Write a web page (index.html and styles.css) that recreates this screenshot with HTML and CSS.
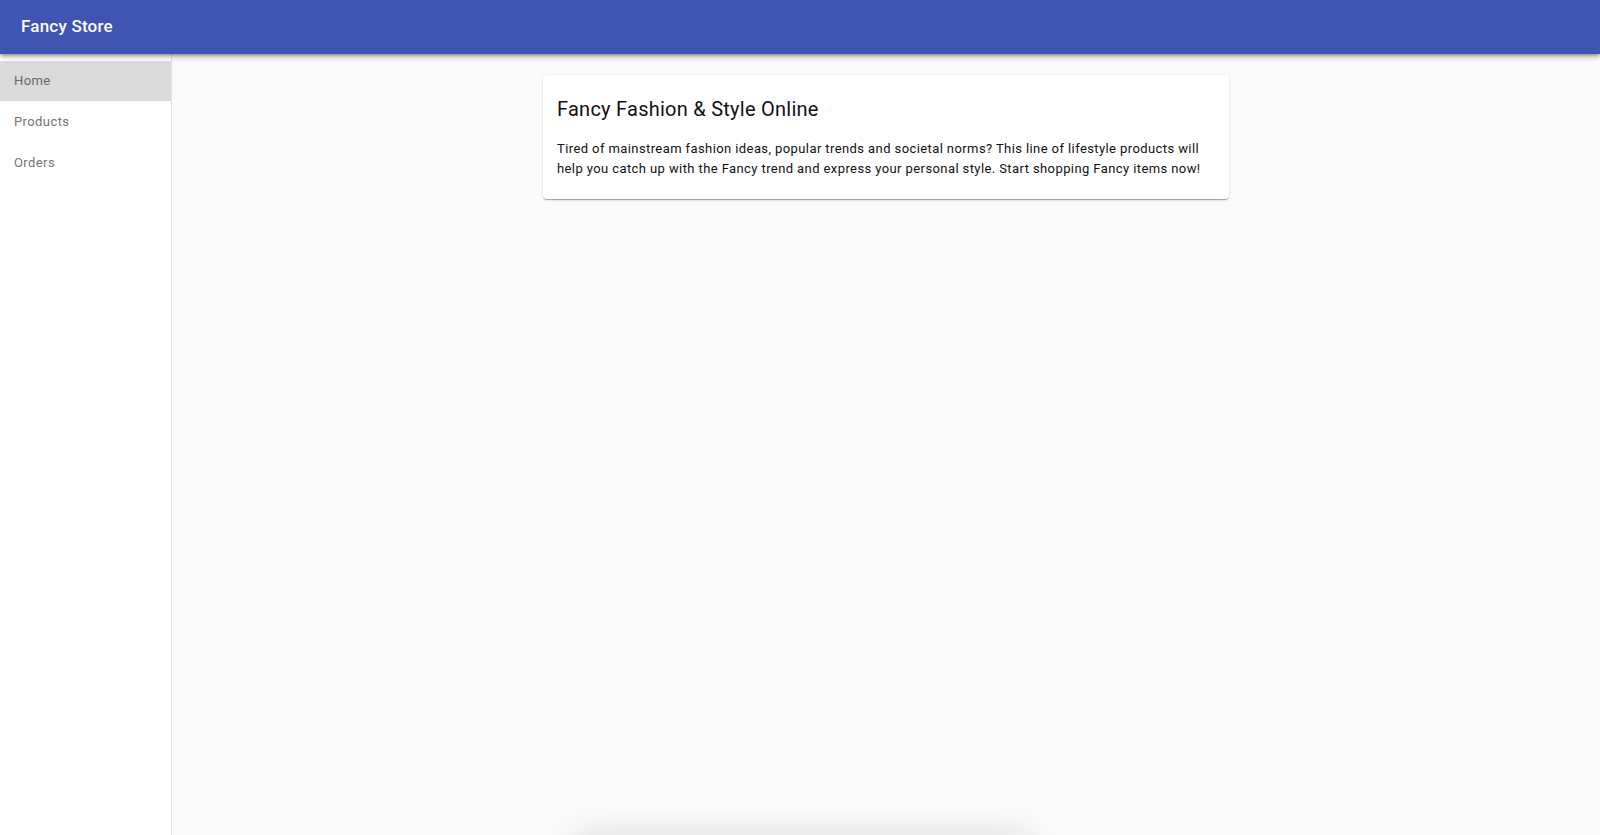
FILE: index.html
```html
<!DOCTYPE html>
<html lang="en">
<head>
<meta charset="utf-8">
<meta name="viewport" content="width=device-width, initial-scale=1">
<title>Fancy Store</title>
<link rel="stylesheet" href="styles.css">
</head>
<body>
<div class="app">
  <header class="app-bar">
    <h1 class="app-title">Fancy Store</h1>
  </header>
  <div class="layout">
    <nav class="drawer" aria-label="Main">
      <a class="nav-item nav-item-active" href="#home" aria-current="page">Home</a>
      <a class="nav-item" href="#products">Products</a>
      <a class="nav-item" href="#orders">Orders</a>
    </nav>
    <main class="content">
      <article class="card">
        <h2 class="card-title">Fancy Fashion &amp; Style Online</h2>
        <p class="card-text">Tired of mainstream fashion ideas, popular trends and societal norms? This line of lifestyle products will help you catch up with the Fancy trend and express your personal style. Start shopping Fancy items now!</p>
      </article>
    </main>
  </div>
  <div class="bottom-glow" aria-hidden="true"></div>
</div>
</body>
</html>
```
FILE: styles.css
```css
* {
  box-sizing: border-box;
}

body {
  margin: 0;
  font-family: Roboto, "Liberation Sans", sans-serif;
  color: #111;
  background: #fafafa;
}

.app {
  position: relative;
  display: flex;
  flex-direction: column;
  min-height: 100vh;
  overflow: hidden;
}

.app-bar {
  position: relative;
  z-index: 1;
  padding: 14px 21px 16px;
  color: #fff;
  background: #4054b2;
  box-shadow: 0 2px 3px -1px rgba(0, 0, 0, 0.3), 0 3px 5px rgba(0, 0, 0, 0.16), 0 1px 8px rgba(0, 0, 0, 0.14);
}

.app-title {
  margin: 0;
  font-size: 17px;
  line-height: 24px;
  font-weight: 500;
  letter-spacing: 0.0125em;
}

.layout {
  display: flex;
  flex: 1;
}

.drawer {
  display: flex;
  flex: none;
  flex-direction: column;
  gap: 1px;
  width: 172px;
  padding-top: 7px;
  background: #fff;
  border-right: 1px solid #e4e4e4;
}

.nav-item {
  padding: 8px 14px;
  font-size: 13px;
  line-height: 24px;
  letter-spacing: 0.03125em;
  color: #757575;
  text-decoration: none;
}

.nav-item-active {
  color: #686868;
  background: #dadada;
}

.content {
  flex: 1;
  padding: 21px;
}

.card {
  max-width: 686px;
  margin: 0 auto;
  padding: 20px 14px;
  background: #fff;
  border-radius: 4px;
  box-shadow: 0 2px 1px -1px rgba(0, 0, 0, 0.2), 0 1px 1px rgba(0, 0, 0, 0.14), 0 1px 3px rgba(0, 0, 0, 0.12);
}

.card-title {
  margin: 0 0 16px;
  font-size: 20px;
  line-height: 28px;
  font-weight: 400;
  letter-spacing: 0.0125em;
}

.card-text {
  margin: 0;
  font-size: 13px;
  line-height: 20px;
  letter-spacing: 0.03125em;
}

.bottom-glow {
  position: absolute;
  bottom: -20px;
  left: 50%;
  width: 456px;
  height: 20px;
  margin-left: -226px;
  box-shadow: 0 4px 36px rgba(0, 0, 0, 0.18);
}
```
